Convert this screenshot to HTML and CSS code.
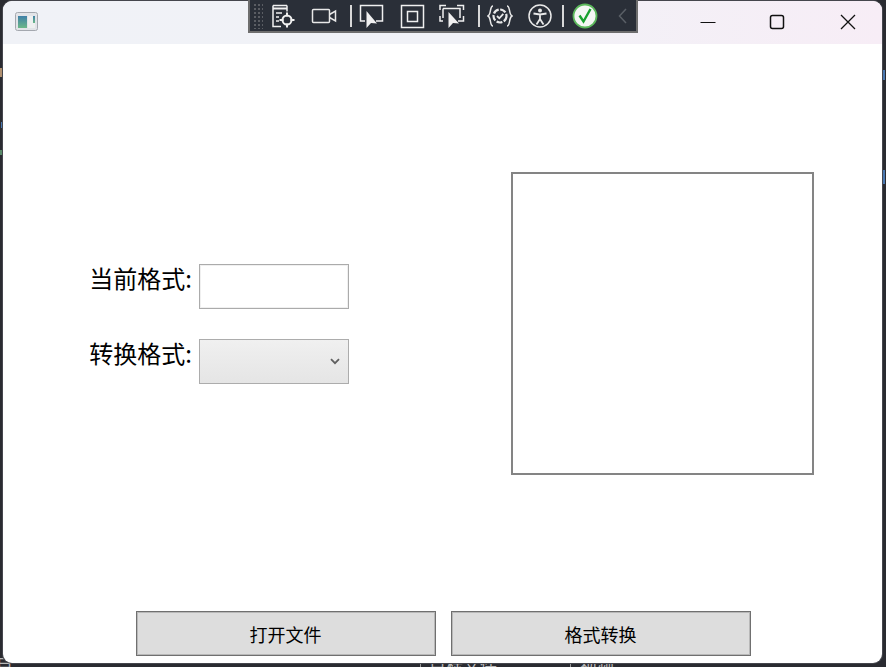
FILE: index.html
```html
<!DOCTYPE html>
<html lang="zh-CN">
<head>
<meta charset="utf-8">
<title>格式转换</title>
<link rel="stylesheet" href="styles.css">
</head>
<body>
<div class="backdrop-text">
  <span class="bt-a">目</span><span class="bt-b">目标文件</span><span class="bt-c">视频</span>
</div>
<div class="window">
  <header class="titlebar">
    <svg class="app-icon" width="24" height="20" viewBox="0 0 24 20">
      <defs><linearGradient id="g" x1="0" y1="0" x2="0" y2="1"><stop offset="0" stop-color="#3f80a8"/><stop offset="1" stop-color="#6cb888"/></linearGradient></defs>
      <rect x="0.5" y="0.5" width="22" height="18" rx="2" fill="#e2e4e8" stroke="#a4a8af"/>
      <rect x="3" y="4" width="9" height="12" fill="url(#g)"/>
      <rect x="13" y="4" width="7" height="12" fill="#eef0f0"/>
      <rect x="18" y="4" width="2" height="7" fill="url(#g)"/>
    </svg>
    <div class="caption">
      <svg class="cap-btn" width="16" height="16" viewBox="0 0 16 16"><path d="M0.500 8.500h15" stroke="#111" stroke-width="1.200" fill="none"/></svg>
      <svg class="cap-btn" width="16" height="16" viewBox="0 0 16 16"><rect x="1.500" y="1.500" width="13" height="13" rx="2" stroke="#111" stroke-width="1.500" fill="none"/></svg>
      <svg class="cap-btn cap-close" width="16" height="16" viewBox="0 0 16 16"><path d="M1 1l14 14M15 1L1 15" stroke="#111" stroke-width="1.300" fill="none"/></svg>
    </div>
  </header>
  <main class="content">
    <div class="upper">
      <form class="fields">
        <div class="field"><label class="field-label">当前格式:</label><input class="text-input" type="text"></div>
        <div class="field"><label class="field-label">转换格式:</label>
          <div class="combo"><svg width="10" height="7" viewBox="0 0 10 7"><path d="M1 1.200l4 4 4-4" stroke="#606060" stroke-width="1.800" fill="none"/></svg></div>
        </div>
      </form>
      <div class="preview"></div>
    </div>
    <div class="actions">
      <button class="action" type="button">打开文件</button>
      <button class="action" type="button">格式转换</button>
    </div>
  </main>
</div>
<div class="devbar">
  <div class="grip"></div>
  <svg class="tool t1" width="26" height="26" viewBox="0 0 26 26" fill="none" stroke="#f0f0f0" stroke-width="1.500">
    <path d="M3 2.500h14M3 2.500v21h8M17 2.500v6"/><path d="M3 5.500h14" stroke-width="2"/><path d="M6 10h6M6 14h3M6 18h3"/>
    <circle cx="17" cy="17" r="4.500" stroke-width="2"/><path d="M17 9.500v4M17 20.500v4M9.500 17h4M20.500 17h4" stroke-width="2"/>
  </svg>
  <svg class="tool t2" width="26" height="26" viewBox="0 0 26 26" fill="none" stroke="#e8e8e8" stroke-width="1.500">
    <rect x="1.500" y="6.500" width="17" height="13" rx="1"/><path d="M18.500 11.500l6-3.500v10l-6-3.500"/>
  </svg>
  <span class="sep s1"></span>
  <svg class="tool t3" width="26" height="26" viewBox="0 0 26 26" fill="none" stroke="#f0f0f0" stroke-width="1.500">
    <path d="M6 18H1.500V2.500h22V18H17"/><path d="M7.500 8v17l4.500-5 6 .5z" fill="#f0f0f0" stroke="none"/>
  </svg>
  <svg class="tool t4" width="26" height="26" viewBox="0 0 26 26" fill="none" stroke="#f0f0f0" stroke-width="1.500">
    <rect x="1.500" y="2.500" width="22" height="22"/><rect x="7.500" y="8.500" width="10" height="10"/>
  </svg>
  <svg class="tool t5" width="26" height="26" viewBox="0 0 26 26" fill="none" stroke="#f0f0f0" stroke-width="1.500">
    <path d="M1 7V2.500h6M18 2.500h6.500V7M1 13v5h3M24.500 13v5H19M4 5.500h17V15M4 5.500V15"/><path d="M9.500 9v16l4.500-5 6 .5z" fill="#f0f0f0" stroke="none"/>
  </svg>
  <span class="sep s2"></span>
  <svg class="tool t6" width="26" height="26" viewBox="0 0 26 26" fill="none" stroke="#e8e8e8" stroke-width="1.500">
    <path d="M6 3C2.500 3 4.500 11 1 13c3.500 2 1.500 10 5 10M20 3c3.500 0 1.500 8 5 10-3.500 2-1.500 10-5 10"/>
    <circle cx="13" cy="13" r="6.500" stroke-width="2.200" stroke-dasharray="6 1.500"/><path d="M10 13l2.300 2.300 4-4.500" stroke-width="1.800"/>
  </svg>
  <svg class="tool t7" width="26" height="26" viewBox="0 0 26 26" fill="none" stroke="#e8e8e8" stroke-width="1.500">
    <circle cx="13" cy="13" r="11"/><circle cx="13" cy="7.500" r="2" fill="#e8e8e8" stroke="none"/>
    <path d="M6.500 10.500L13 11.500l6.500-1M13 11.500v4.500M13 16l-3.500 5.500M13 16l3.500 5.500" stroke-width="1.800"/>
  </svg>
  <span class="sep s3"></span>
  <svg class="tool t8" width="26" height="26" viewBox="0 0 26 26">
    <circle cx="13" cy="13" r="11.500" fill="#f4f6f4" stroke="#5cb85c" stroke-width="1.800"/>
    <path d="M7.500 12.500l4 6L18.500 6" stroke="#17a02e" stroke-width="2.400" fill="none"/>
  </svg>
  <svg class="tool t9" width="12" height="18" viewBox="0 0 12 18"><path d="M9 2L2.500 9 9 16" stroke="#5a5f66" stroke-width="1.500" fill="none"/></svg>
</div>
</body>
</html>
```
FILE: styles.css
```css
html, body { margin: 0; height: 100%; }
body {
  position: relative;
  width: 886px;
  height: 667px;
  overflow: hidden;
  background-color: #2a2b31;
  background-image:
    linear-gradient(#b09070, #b09070),
    linear-gradient(#4a78b0, #4a78b0),
    linear-gradient(#5a8a6a, #5a8a6a),
    linear-gradient(#4a78b0, #4a78b0),
    linear-gradient(#4a78b0, #4a78b0);
  background-size: 2px 9px, 2px 6px, 2px 5px, 2px 10px, 2px 14px;
  background-position: 0 68px, 1px 122px, 0 150px, 883px 70px, 883px 170px;
  background-repeat: no-repeat;
  font-family: "Noto Sans CJK SC", "Liberation Sans", sans-serif;
  padding: 1px 4px 4px 3px;
  box-sizing: border-box;
}
.backdrop-text {
  position: absolute;
  left: 0; right: 0; top: 656px;
  height: 11px;
  overflow: hidden;
  color: #b8b8b8;
  font-size: 17px;
  line-height: 17px;
}
.backdrop-text span { position: absolute; top: 0; }
.bt-a { left: -4px; }
.bt-b { left: 420px; padding-left: 8px; border-left: 1px solid #9a9a9a; }
.bt-c { left: 570px; padding-left: 9px; border-left: 1px solid #9a9a9a; }
.window {
  position: relative;
  width: 879px;
  height: 662px;
  background: #fff;
  border-radius: 9px;
  box-shadow: 0 0 0 1px #45464d;
  overflow: hidden;
  display: flex;
  flex-direction: column;
}
.titlebar {
  flex: 0 0 43px;
  display: flex;
  align-items: center;
  justify-content: space-between;
  background: linear-gradient(90deg, #f0f2f7 0%, #f1f2f7 55%, #f7edf6 100%);
  padding-left: 12px;
}
.app-icon { margin-top: -2px; }
.caption { display: flex; gap: 53px; padding-right: 26px; margin-top: -2px; }
.cap-close { margin-left: 2px; }
.content {
  flex: 1;
  display: flex;
  flex-direction: column;
  justify-content: space-between;
  padding-bottom: 7px;
}
.upper {
  display: flex;
  align-items: flex-start;
  justify-content: space-between;
  padding: 128px 68px 0 0;
}
.fields {
  display: flex;
  flex-direction: column;
  gap: 30px;
  padding-top: 92px;
}
.field { display: flex; align-items: flex-start; }
.field-label {
  width: 189px;
  margin-right: 7px;
  text-align: right;
  font-size: 24px;
  line-height: 28px;
  color: #000;
}
.text-input {
  box-sizing: border-box;
  width: 150px;
  height: 45px;
  border: 1px solid #ababab;
  box-shadow: inset 0 0 0 1px #f0f0f0;
  background: #fff;
  padding: 0;
  margin: 0;
  outline: none;
}
.combo {
  box-sizing: border-box;
  width: 150px;
  height: 45px;
  border: 1px solid #acacac;
  background: linear-gradient(180deg, #f0f0f0, #e5e5e5);
  display: flex;
  align-items: center;
  justify-content: flex-end;
  padding-right: 8px;
}
.preview {
  box-sizing: border-box;
  width: 303px;
  height: 303px;
  border: 2px solid #848484;
}
.actions {
  display: flex;
  justify-content: center;
  gap: 15px;
  padding-left: 2px;
}
.action {
  box-sizing: border-box;
  width: 300px;
  height: 45px;
  border: 1px solid #707070;
  box-shadow: inset 0 0 0 1px #b8b8b8;
  background: #dddddd;
  color: #000;
  font-family: inherit;
  font-size: 18px;
  padding: 0 1px 0 0;
}
.devbar {
  position: absolute;
  left: 248px;
  top: 0;
  box-sizing: border-box;
  width: 390px;
  height: 33px;
  background: #2a2f38;
  border: 2px solid #6e6e6e;
  border-top: 0;
  display: flex;
  align-items: center;
}
.grip {
  width: 10px;
  height: 26px;
  margin-left: 3px;
  background-image: radial-gradient(#5a5d63 1px, transparent 1.2px);
  background-size: 4px 4px;
}
.tool { flex: none; }
.sep { width: 2px; height: 22px; background: #d8d8d8; flex: none; }
.t1 { margin-left: 7px; }
.t2 { margin-left: 15px; }
.s1 { margin-left: 13px; }
.t3 { margin-left: 7px; }
.t4 { margin-left: 15px; }
.t5 { margin-left: 13px; }
.s2 { margin-left: 13px; }
.t6 { margin-left: 7px; }
.t7 { margin-left: 14px; }
.s3 { margin-left: 9px; }
.t8 { margin-left: 8px; }
.t9 { margin-left: 19px; }
```
